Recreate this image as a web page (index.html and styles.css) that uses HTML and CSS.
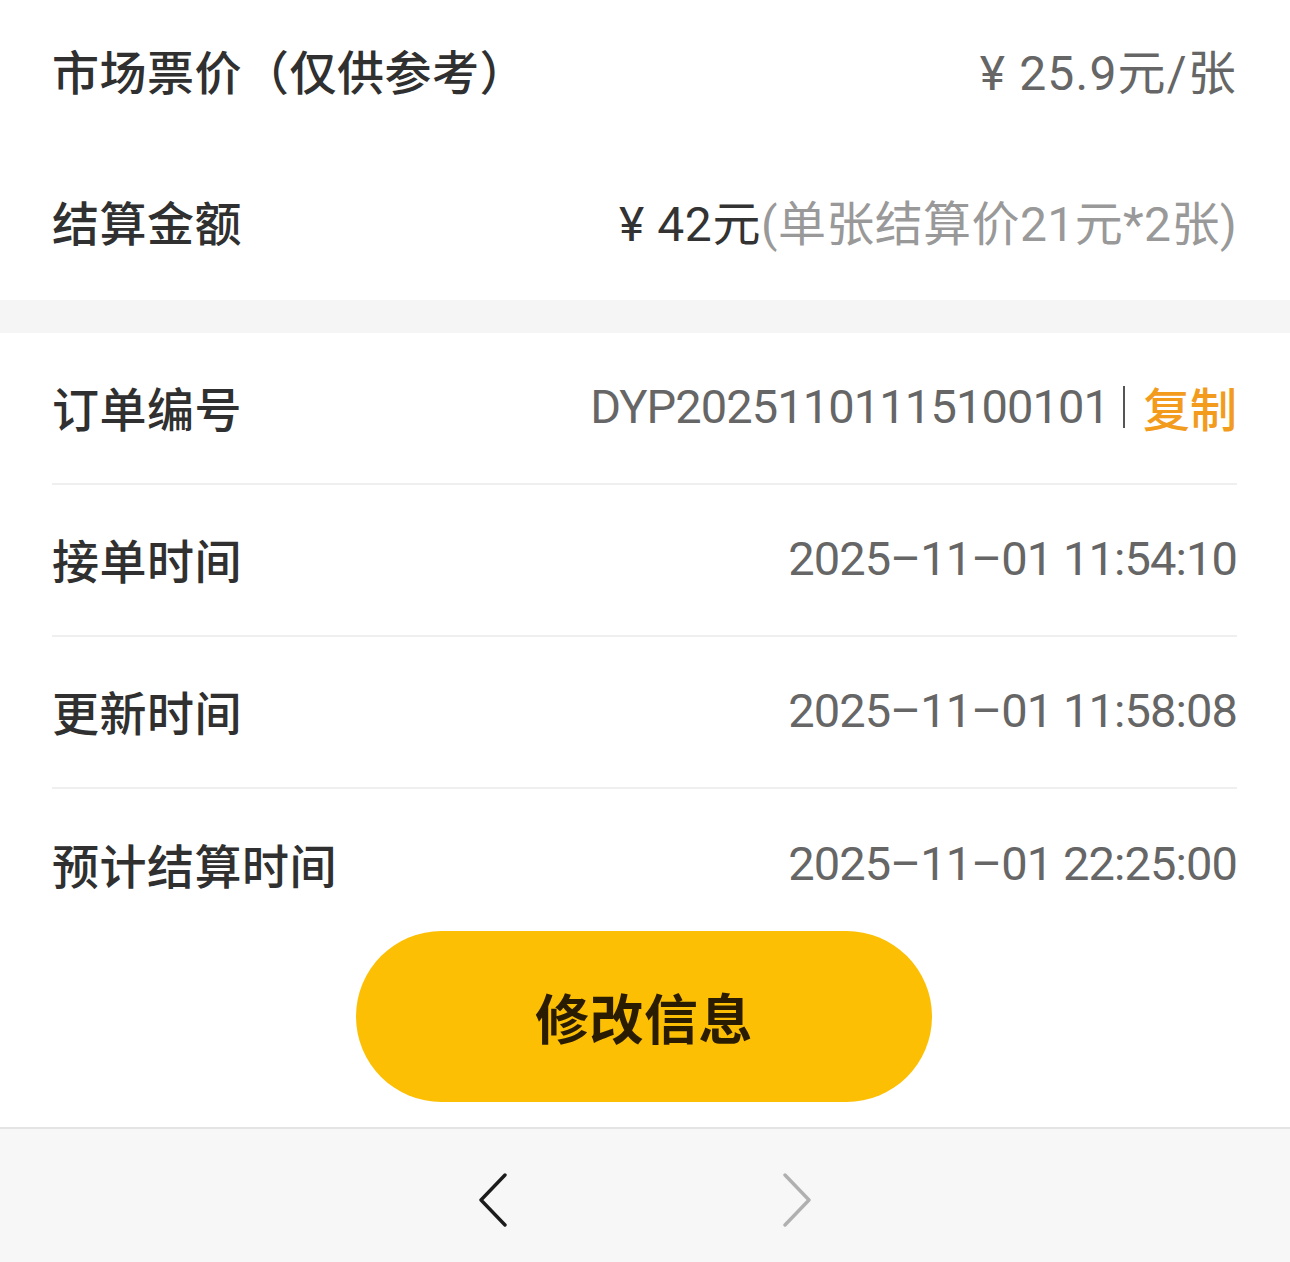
FILE: index.html
```html
<!DOCTYPE html>
<html lang="zh-CN">
<head>
<meta charset="utf-8">
<title>订单详情</title>
<link rel="stylesheet" href="styles.css">
</head>
<body>
<div class="page">
  <section class="card">
    <div class="row row-first">
      <span class="label">市场票价（仅供参考）</span>
      <span class="value wide price">¥ 25.9元/张</span>
    </div>
    <div class="row row-second">
      <span class="label">结算金额</span>
      <span class="value wide"><span class="strong">¥ 42元</span><span class="muted">(单张结算价21元*2张)</span></span>
    </div>
  </section>
  <div class="gap"></div>
  <section class="card">
    <div class="row divided">
      <span class="label">订单编号</span>
      <span class="value"><span class="num">DYP2025110111510010</span><span class="num">1</span><span class="sep"></span><span class="copy">复制</span></span>
    </div>
    <div class="row divided">
      <span class="label">接单时间</span>
      <span class="value num">2025–11–01 11:54:10</span>
    </div>
    <div class="row divided">
      <span class="label">更新时间</span>
      <span class="value num">2025–11–01 11:58:08</span>
    </div>
    <div class="row row-last">
      <span class="label">预计结算时间</span>
      <span class="value num">2025–11–01 22:25:00</span>
    </div>
    <div class="action">
      <button class="btn" type="button">修改信息</button>
    </div>
  </section>
  <nav class="bottom-bar">
    <svg class="chev" width="30" height="54" viewBox="0 0 30 54"><polyline points="27,2 3,27 27,52" fill="none" stroke="#1c1c1c" stroke-width="3.4" stroke-linecap="round" stroke-linejoin="round"/></svg>
    <svg class="chev" width="30" height="54" viewBox="0 0 30 54"><polyline points="3,2 27,27 3,52" fill="none" stroke="#b0b0b0" stroke-width="3.4" stroke-linecap="round" stroke-linejoin="round"/></svg>
  </nav>
</div>
</body>
</html>
```

FILE: styles.css
```css
* { box-sizing: border-box; }
html, body { margin: 0; padding: 0; background: #ffffff; }
body {
  font-family: Roboto, "Noto Sans CJK SC", "Noto Sans", sans-serif;
  color: #333333;
}
.page {
  width: 1290px;
  height: 1262px;
  display: flex;
  flex-direction: column;
  overflow: hidden;
}
.card {
  background: #ffffff;
  padding: 0 53px 0 52px;
}
.gap {
  height: 33px;
  background: #f5f5f5;
}
.row {
  height: 152px;
  display: flex;
  align-items: center;
  justify-content: space-between;
}
.row-first { height: 148px; padding-bottom: 10px; }
.row-second { padding-bottom: 8px; }
.divided { border-bottom: 2px solid #efefef; height: 152px; padding-bottom: 3px; }
.row-last { height: 142px; padding-top: 7px; }
.label {
  font-family: "Noto Sans CJK SC", sans-serif;
  font-size: 47px;
  font-weight: 500;
  color: #303030;
  letter-spacing: 0.5px;
}
.value {
  font-family: Roboto, "Noto Sans CJK SC", sans-serif;
  font-size: 47px;
  color: #666666;
  display: flex;
  align-items: center;
}
.value.wide { font-size: 48px; letter-spacing: 0.6px; }
.value.price { letter-spacing: 1.2px; }
.num { letter-spacing: -0.9px; }
.strong { color: #333333; }
.muted { color: #999999; letter-spacing: 0.4px; }
.sep {
  display: inline-block;
  width: 2px;
  height: 42px;
  background: #555555;
  margin: 0 18px 0 14px;
}
.copy {
  font-family: "Noto Sans CJK SC", sans-serif;
  color: #f29b1c;
  font-weight: 500;
}
.action {
  display: flex;
  justify-content: center;
  padding: 0 0 25px 0;
}
.btn {
  width: 576px;
  height: 171px;
  border: none;
  border-radius: 86px;
  background: #fcbf04;
  color: #2a1c00;
  font-family: "Noto Sans CJK SC", sans-serif;
  font-size: 54px;
  font-weight: 700;
  letter-spacing: 0.5px;
  margin-left: -1px;
}
.bottom-bar {
  flex: 1;
  background: #f7f7f7;
  border-top: 2px solid #e4e4e4;
  display: flex;
  justify-content: center;
  align-items: center;
  gap: 274px;
  padding-top: 8px;
}
```
